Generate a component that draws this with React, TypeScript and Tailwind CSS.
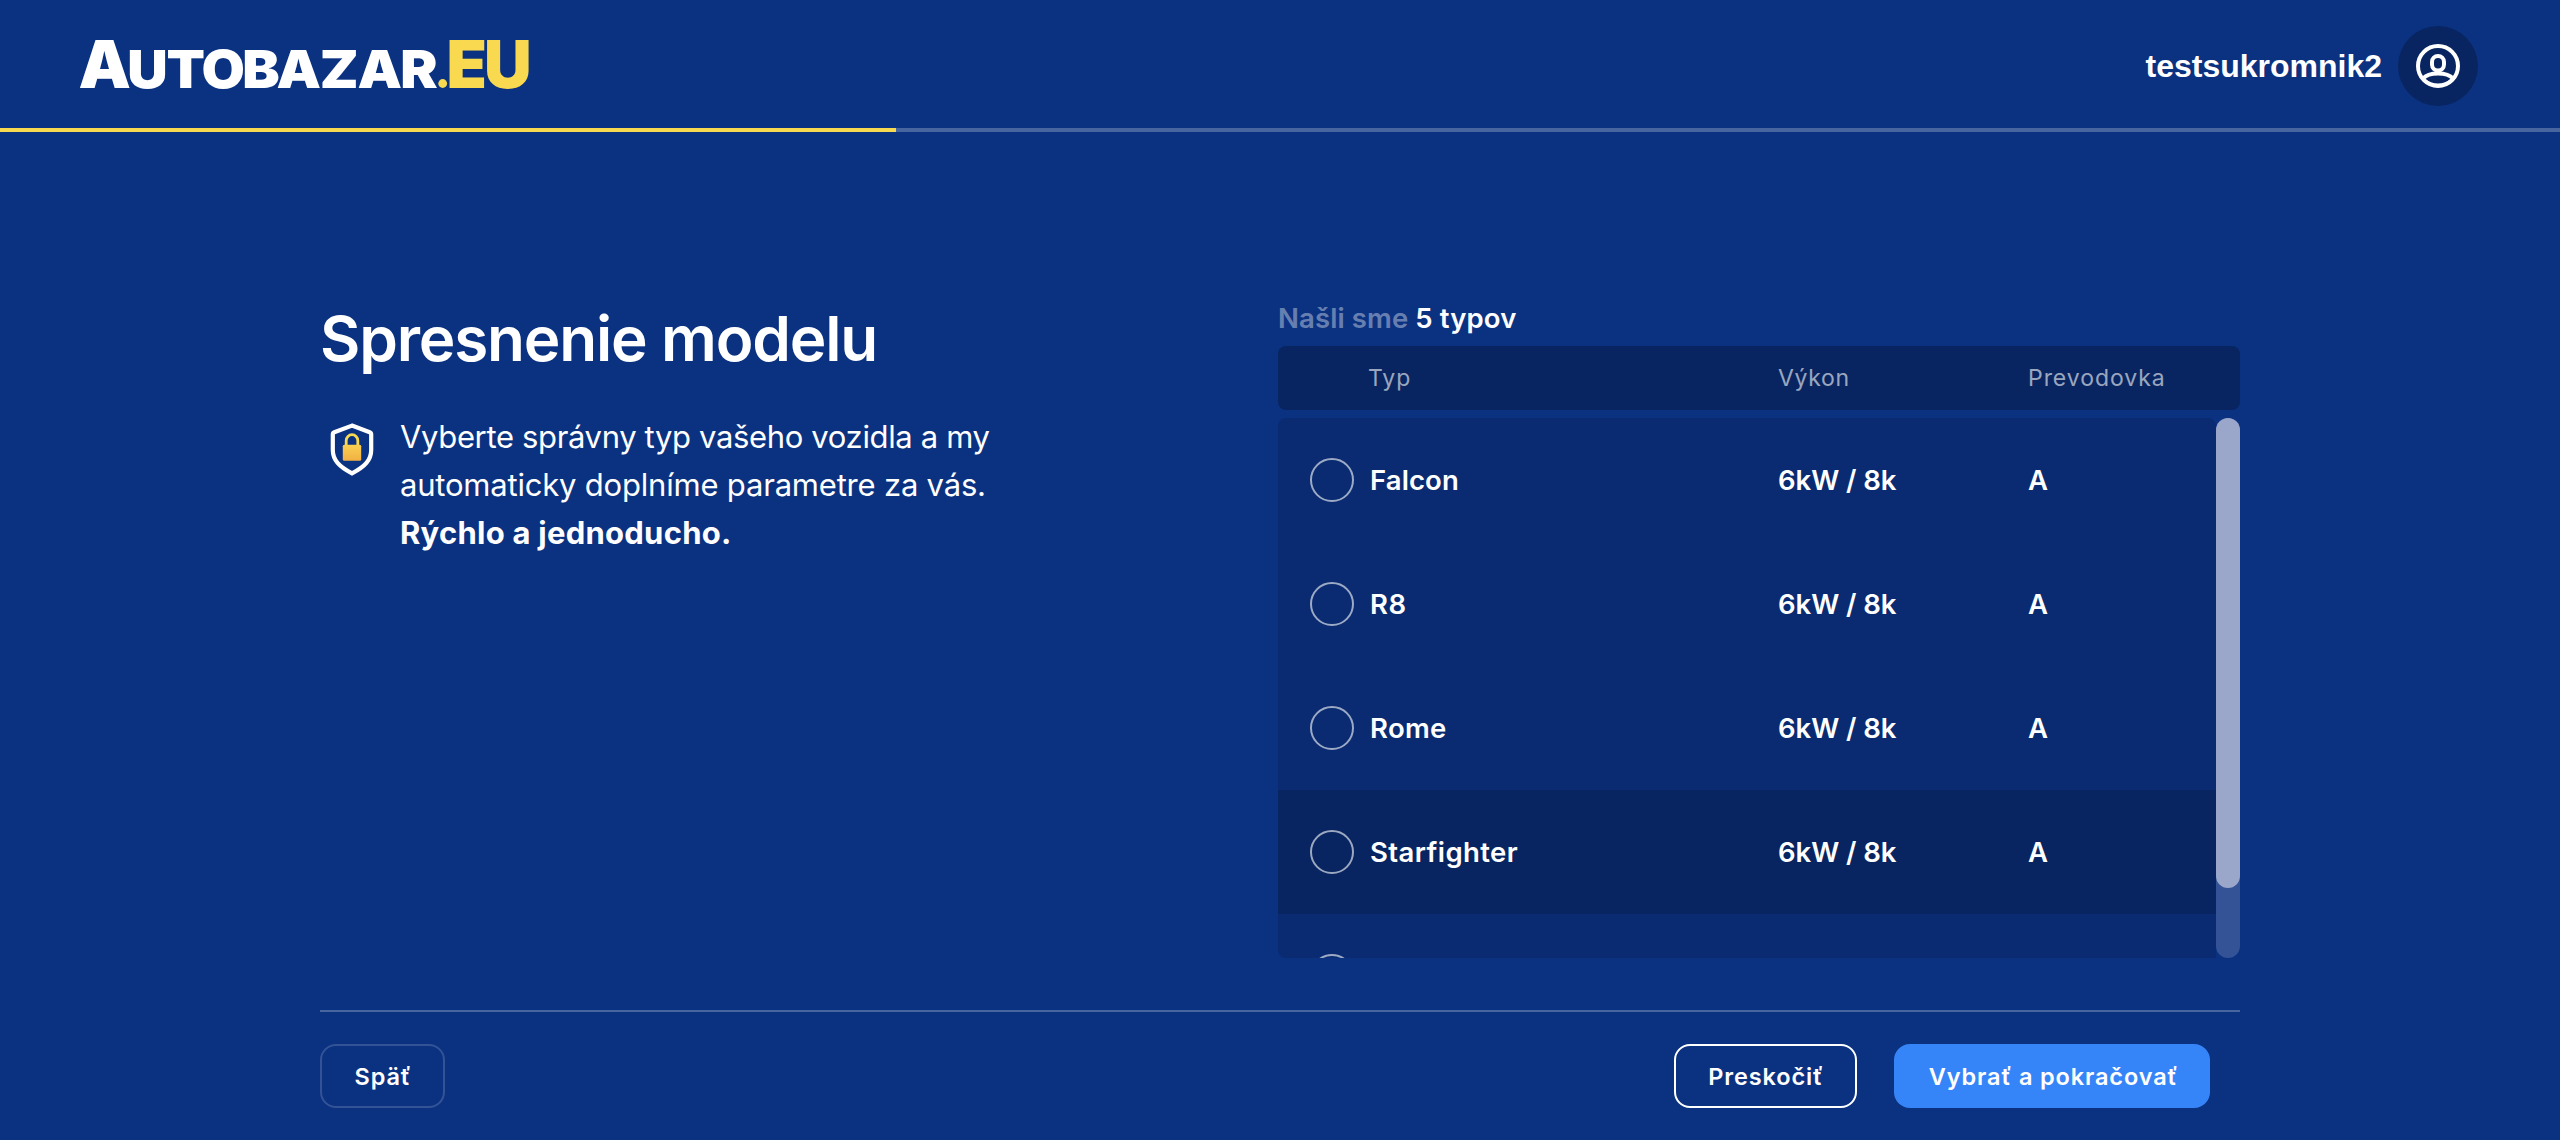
const TYPES = [
  { name: 'Falcon', power: '6kW / 8k', gearbox: 'A', tracking: 'tracking-[0.100px]' },
  { name: 'R8', power: '6kW / 8k', gearbox: 'A', tracking: 'tracking-[0.600px]' },
  { name: 'Rome', power: '6kW / 8k', gearbox: 'A', tracking: 'tracking-[0.300px]' },
  { name: 'Starfighter', power: '6kW / 8k', gearbox: 'A', tracking: 'tracking-[0.400px]', active: true },
];

function Logo() {
  return (
    <svg
      className="h-[60px] w-[460px] overflow-visible font-['Inter',sans-serif] font-black"
      viewBox="0 0 460 60"
    >
      <text y="54" fontSize="66" fill="#fff" x="-1.5">A</text>
      <text y="54" fontSize="52" fill="#fff" transform="scale(1.078 1)" x="43.900 80.200 112.700 150.500 182.200 222.300 257.400 297.100">
        UTOBAZAR
      </text>
      <text y="54" fontSize="66" fill="#f9d94f" x="366.400 404">EU</text>
      <circle cx="362.700" cy="49.500" r="4.400" fill="#f9d94f" />
    </svg>
  );
}

function UserIcon() {
  return (
    <svg className="size-11" viewBox="0 0 44 44" fill="none" stroke="#fff" strokeWidth="4">
      <circle cx="22" cy="22" r="20" />
      <rect x="16" y="12" width="12" height="14.500" rx="6" />
      <path d="M7 34.500C10 31 16 29.500 22 29.500S34 31 37 34.500" />
      <path d="M8 35C12 38.500 17 40.500 22 40.500s10-2 14-5.500" strokeWidth="2" />
    </svg>
  );
}

function ShieldIcon() {
  return (
    <svg className="h-[53px] w-11 shrink-0" viewBox="0 0 44 53" fill="none">
      <defs>
        <linearGradient id="lock" x1="0" y1="0" x2="0" y2="1">
          <stop offset="0" stopColor="#f9d051" />
          <stop offset="1" stopColor="#f1b043" />
        </linearGradient>
      </defs>
      <path
        d="M22 2.600 4.300 9.200C3.300 9.600 2.800 10.300 2.800 11.400V27C2.800 37 9 43.500 22 50.300 35 43.500 41.200 37 41.200 27V11.400c0-1.100-.5-1.800-1.500-2.200Z"
        stroke="#fff"
        strokeWidth="4.200"
      />
      <path d="M16.200 23v-5.500a5.800 5.800 0 0 1 11.600 0V23" stroke="#f9d94f" strokeWidth="2.800" />
      <rect x="12.800" y="21.700" width="18.400" height="16" rx="1.500" fill="url(#lock)" />
    </svg>
  );
}

function Radio() {
  return <span className="size-11 shrink-0 rounded-full border-2 border-white/60" />;
}

export default function App() {
  return (
    <div className="flex h-[1140px] w-[2560px] flex-col overflow-hidden bg-[#0b3281] font-['Inter',sans-serif] text-white">
      <header className="flex h-32 shrink-0 items-center justify-between pr-[82px] pl-20">
        <Logo />
        <div className="flex items-center gap-4 pt-1">
          <span className="font-['Liberation_Sans',sans-serif] text-[32px] leading-10 font-bold">testsukromnik2</span>
          <div className="flex size-20 items-center justify-center rounded-full bg-[#082561]">
            <UserIcon />
          </div>
        </div>
      </header>
      <div className="h-1 shrink-0 bg-[#48659f]">
        <div className="h-full w-[35%] bg-[#f9d94f]" />
      </div>

      <main className="mx-auto flex h-[880px] w-[1920px] shrink-0 justify-between border-b-2 border-[#48659f]">
        <section className="pt-[167px]">
          <h1 className="text-[62px] leading-[80px] font-semibold tracking-[-1.180px]">Spresnenie modelu</h1>
          <div className="mt-[34px] flex gap-[26px] pl-[10px]">
            <div className="pt-[10px]">
              <ShieldIcon />
            </div>
            <p className="text-[31px] leading-[48px]">
              <span className="tracking-[-0.350px]">Vyberte správny typ vašeho vozidla a my</span>
              <br />
              <span className="tracking-[-0.200px]">automaticky doplníme parametre za vás.</span>
              <br />
              <strong className="font-bold tracking-[0.250px]">Rýchlo a jednoducho.</strong>
            </p>
          </div>
        </section>

        <section className="w-[962px] pt-[166px]">
          <p className="h-12 text-[27.500px] leading-10 font-semibold tracking-[0.120px] text-white/40">
            Našli sme <span className="text-white">5 typov</span>
          </p>
          <div className="grid h-16 grid-cols-[500px_250px_1fr] items-center rounded-lg bg-[#082561] text-[23px] tracking-[0.950px] text-white/60 [&>*:first-child]:pl-[90px]">
            <span>Typ</span>
            <span className="tracking-[0.700px]">Výkon</span>
            <span>Prevodovka</span>
          </div>
          <div className="mt-2 flex h-[540px]">
            <div className="flex-1 overflow-hidden rounded-l-lg rounded-tr-lg bg-[#0a2b71]">
              {TYPES.map((t) => (
                <div
                  key={t.name}
                  className={`grid h-[124px] grid-cols-[500px_250px_1fr] items-center text-[27.500px] font-semibold ${t.active ? 'bg-[#082561]' : ''}`}
                >
                  <div className="flex items-center gap-4 pl-8">
                    <Radio />
                    <span className={`pt-px ${t.tracking}`}>{t.name}</span>
                  </div>
                  <span className="pt-px tracking-[-0.050px]">{t.power}</span>
                  <span className="pt-px">{t.gearbox}</span>
                </div>
              ))}
              <div className="flex h-[124px] items-center pl-8">
                <Radio />
              </div>
            </div>
            <div className="w-6 rounded-full bg-[#345397]">
              <div className="h-[470px] rounded-full bg-[#9aa6ca]" />
            </div>
          </div>
        </section>
      </main>

      <footer className="mx-auto flex w-[1920px] items-start justify-between pt-8 pr-[30px] text-[23.500px] font-semibold tracking-[0.870px]">
        <button className="h-16 w-[125px] rounded-2xl border-2 border-[#345397] pt-0.5 pl-px">Späť</button>
        <div className="flex gap-[37px]">
          <button className="h-16 w-[183px] rounded-2xl border-2 border-white pt-0.5 pl-px">Preskočiť</button>
          <button className="h-16 w-[316px] rounded-2xl bg-[#3685f8] pt-0.5 pl-[3px]">Vybrať a pokračovať</button>
        </div>
      </footer>
    </div>
  );
}
